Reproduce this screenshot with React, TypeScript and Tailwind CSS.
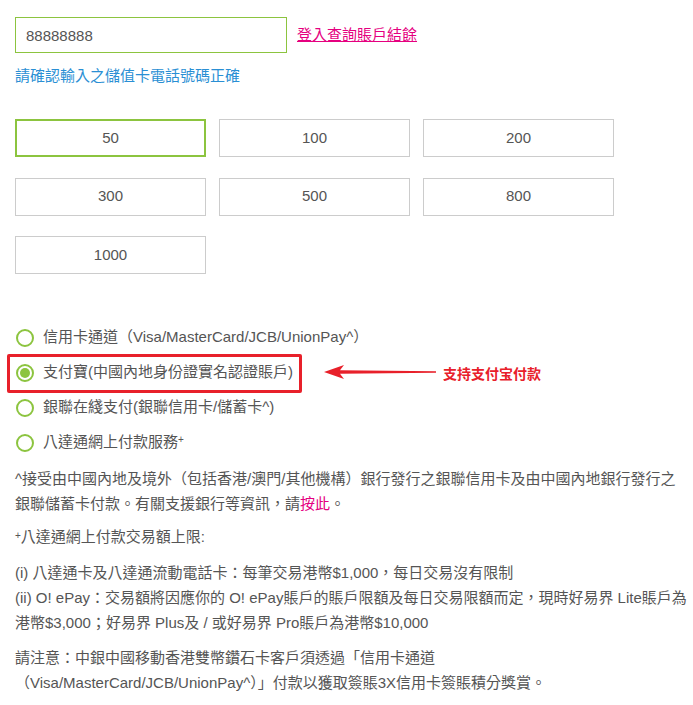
import { useState } from 'react';

const amounts = ['50', '100', '200', '300', '500', '800', '1000'];

const methods = [
  { id: 'card', label: <>信用卡通道（Visa/MasterCard/JCB/UnionPay^）</> },
  { id: 'alipay', label: <>支付寶(中國內地身份證實名認證賬戶)</> },
  { id: 'unionpay', label: <>銀聯在綫支付(銀聯信用卡/儲蓄卡^)</> },
  {
    id: 'octopus',
    label: (
      <>
        八達通網上付款服務<sup className="text-[10px] relative -top-[4px]">+</sup>
      </>
    ),
  },
];

const Radio = ({ checked }: { checked: boolean }) => (
  <span className="w-[18px] h-[18px] rounded-full border-2 border-[#8cc43f] flex items-center justify-center shrink-0">
    {checked && <span className="w-[10px] h-[10px] rounded-full bg-[#8cc43f]"></span>}
  </span>
);

const App = () => {
  const [amount, setAmount] = useState('50');
  const [method, setMethod] = useState('alipay');

  return (
    <div
      className="w-[693px] min-h-[705px] bg-white pl-[15px] pr-[5px] pt-[17px] text-[15px] text-[#555]"
      style={{ fontFamily: '"Liberation Sans", "Noto Sans CJK TC", sans-serif' }}
    >
      <div className="flex items-center">
        <input
          defaultValue="88888888"
          className="w-[272px] h-[36px] border border-[#8cc43f] px-[10px] text-[15px] text-[#555] outline-none"
        />
        <a href="#" className="ml-[10px] text-[#e5007f] underline">
          登入查詢賬戶結餘
        </a>
      </div>
      <div className="mt-[11px] leading-[24px] text-[#2a8fd4]">請確認輸入之儲值卡電話號碼正確</div>

      <div className="mt-[31px] grid grid-cols-[191px_191px_191px] gap-x-[13px] gap-y-[20.5px]">
        {amounts.map((a) => (
          <button
            key={a}
            onClick={() => setAmount(a)}
            className={
              amount === a
                ? 'h-[38px] border-2 border-[#8cc43f] bg-white text-[15px] text-[#555]'
                : 'h-[38px] border border-[#ccc] bg-white text-[15px] text-[#555]'
            }
          >
            {a}
          </button>
        ))}
      </div>

      <div className="mt-[46px] flex flex-col">
        {methods.map((m) => (
          <div key={m.id} className="relative h-[35px] flex items-center gap-[9px] pl-[1px]" onClick={() => setMethod(m.id)}>
            <Radio checked={method === m.id} />
            <span>{m.label}</span>
            {m.id === 'alipay' && (
              <>
                <div className="absolute left-[-8px] top-[-1px] w-[295px] h-[39px] border-[3px] border-[#e8202a] rounded-[2px]"></div>
                <svg className="absolute left-[309px] top-[10px]" width="112" height="14" viewBox="0 0 112 14">
                  <polygon points="0,7 20,0 16,5.2 112,6.2 112,7.8 16,8.8 20,14" fill="#e8202a" />
                </svg>
                <span
                  className="absolute left-[428px] top-[6px] text-[14px] font-bold text-[#e8202a] leading-[24px]"
                  style={{ fontFamily: '"Noto Sans CJK SC", sans-serif' }}
                >
                  支持支付宝付款
                </span>
              </>
            )}
          </div>
        ))}
      </div>

      <div className="mt-[6px] leading-[25px]">
        <p>
          ^接受由中國內地及境外（包括香港/澳門/其他機構）銀行發行之銀聯信用卡及由中國內地銀行發行之銀聯儲蓄卡付款。有關支援銀行等資訊，請
          <a href="#" className="text-[#e5007f]">
            按此
          </a>
          。
        </p>
        <p className="mt-[8px]">
          <sup className="text-[10px] relative -top-[3px]">+</sup>八達通網上付款交易額上限:
        </p>
        <p className="mt-[11px]">(i) 八達通卡及八達通流動電話卡：每筆交易港幣$1,000，每日交易沒有限制</p>
        <p>
          (ii) O! ePay：交易額將因應你的 O! ePay賬戶的賬戶限額及每日交易限額而定，現時好易界 Lite賬戶為港幣$3,000；好易界
          Plus及 / 或好易界 Pro賬戶為港幣$10,000
        </p>
        <p className="mt-[10px]">
          請注意：中銀中國移動香港雙幣鑽石卡客戶須透過「信用卡通道
          <br />
          （Visa/MasterCard/JCB/UnionPay^）」付款以獲取簽賬3X信用卡簽賬積分獎賞。
        </p>
      </div>
    </div>
  );
};

export default App;
